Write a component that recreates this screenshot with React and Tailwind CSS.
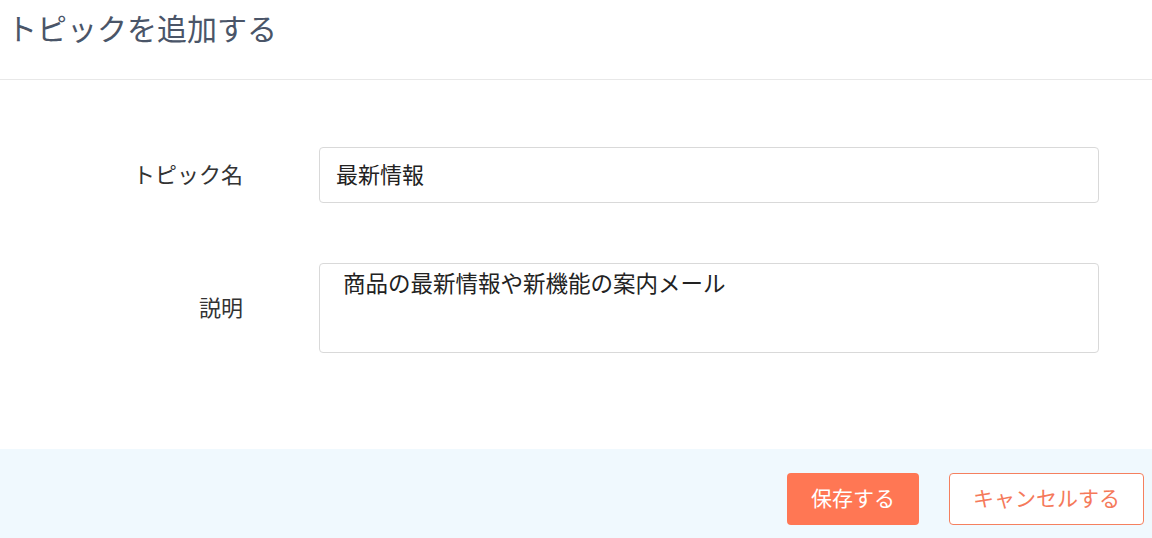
export default function App() {
  const font = { fontFamily: '"Noto Sans CJK JP", "Noto Sans", sans-serif' }

  return (
    <div className="w-[1152px] h-[538px] bg-white flex flex-col overflow-hidden" style={font}>
      <header className="h-[80px] border-b border-[#e8e8e8] px-[7px] pt-[5px]">
        <h1 className="text-[30px] leading-[44px] text-[#4a5568]">トピックを追加する</h1>
      </header>

      <form className="flex-1 flex flex-col gap-[60px] pt-[67px]">
        <div className="flex items-center">
          <label className="w-[243px] text-right text-[22px] text-[#333] pb-[3px]">トピック名</label>
          <input
            defaultValue="最新情報"
            className="ml-[76px] w-[780px] h-[56px] border border-[#d9d9d9] rounded-[4px] px-[16px] pb-[5px] text-[22px] text-[#222] outline-none"
          />
        </div>
        <div className="flex items-center">
          <label className="w-[243px] text-right text-[22px] text-[#333] pb-[3px]">説明</label>
          <textarea
            defaultValue="商品の最新情報や新機能の案内メール"
            className="ml-[76px] w-[780px] h-[90px] border border-[#d9d9d9] rounded-[4px] px-[23px] pt-[2px] text-[22.5px] leading-[32px] text-[#222] outline-none resize-none"
          />
        </div>
      </form>

      <footer className="h-[89px] bg-[#f0f9fe] flex justify-end items-start gap-[30px] pt-[24px] pr-[8px]">
        <button className="w-[132px] h-[52px] rounded-[4px] bg-[#ff7754] text-white text-[21px] pb-[2px]">
          保存する
        </button>
        <button className="w-[195px] h-[52px] rounded-[4px] bg-white border border-[#f5805f] text-[#f5795a] text-[21px] pb-[2px]">
          キャンセルする
        </button>
      </footer>
    </div>
  )
}
